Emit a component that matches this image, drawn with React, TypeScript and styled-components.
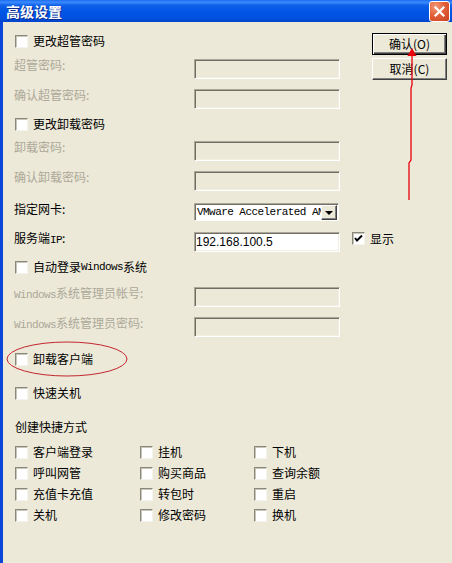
import React from 'react';
import styled, {createGlobalStyle} from 'styled-components';

const GlobalStyle = createGlobalStyle`
	html, body {
		margin: 0;
		padding: 0;
		background: #ece9d8;
	}
	body {
		font-family: "Noto Sans CJK SC", "Liberation Sans", sans-serif;
		font-size: 12px;
	}
	* {
		box-sizing: border-box;
	}
`;

const Window = styled.div`
	position: relative;
	width: 452px;
	height: 563px;
	overflow: hidden;
	background: #ece9d8;
	display: flex;
	flex-direction: column;
`;

const TitleBar = styled.div`
	flex: none;
	height: 22px;
	display: flex;
	align-items: center;
	justify-content: space-between;
	padding: 0 2px 0 6px;
	background: linear-gradient(
		to bottom,
		#1c6cf0 0%,
		#3b8cff 10%,
		#0f5fe8 25%,
		#0055e5 55%,
		#0050de 85%,
		#0043c8 100%
	);
`;

const Title = styled.span`
	color: #fff;
	font-weight: bold;
	font-size: 14px;
	line-height: 14px;
	text-shadow: 1px 1px 0 #0a2a8a;
`;

const CloseButton = styled.div`
	width: 21px;
	height: 21px;
	margin-top: 1px;
	border: 1px solid #fff;
	border-radius: 3px;
	background: radial-gradient(circle at 30% 25%, #f29b78 0%, #e2613a 45%, #c8401f 100%);
	display: flex;
	align-items: center;
	justify-content: center;
`;

const Frame = styled.div`
	flex: 1;
	display: flex;
	border-left: 3px solid #0a46d8;
`;

const Form = styled.div`
	flex: 1;
	min-width: 0;
	display: flex;
	flex-direction: column;
	padding: 9px 0 0 11px;
`;

const Row = styled.div<{$mt: number; $top?: boolean; $h?: number}>`
	display: flex;
	align-items: ${p => (p.$top ? 'flex-start' : 'center')};
	height: ${p => p.$h ?? 20}px;
	margin-top: ${p => p.$mt}px;
`;

const FieldLabel = styled.span<{$disabled?: boolean}>`
	flex: none;
	width: 180px;
	line-height: 12px;
	white-space: nowrap;
	color: ${p => (p.$disabled ? '#aca899' : '#000')};
`;

const Latin = styled.span`
	font-family: "Liberation Mono", monospace;
	font-size: 11px;
	letter-spacing: -0.6px;
`;

const TextBox = styled.input<{$enabled?: boolean}>`
	flex: none;
	width: 146px;
	height: 20px;
	margin: 0;
	padding: 0 1px;
	border: 1px solid;
	border-color: #aca899 #fff #fff #aca899;
	box-shadow: inset 1px 1px 0 #716f64, inset -1px -1px 0 #f1efe2;
	background: ${p => (p.$enabled ? '#fff' : '#ece9d8')};
	font-family: "Liberation Sans", sans-serif;
	font-size: 12px;
	color: #000;
	outline: none;
	-webkit-text-fill-color: #000;
	opacity: 1;
`;

const Select = styled.div`
	flex: none;
	width: 145px;
	height: 18px;
	display: flex;
	border: 1px solid;
	border-color: #aca899 #fff #fff #aca899;
	box-shadow: inset 1px 1px 0 #716f64;
	background: #fff;
	padding: 1px 1px 0 1px;
`;

const SelectText = styled.span`
	flex: 1;
	overflow: hidden;
	white-space: nowrap;
	padding-left: 1px;
	font-family: "Liberation Mono", monospace;
	font-size: 11px;
	letter-spacing: -0.55px;
	line-height: 15px;
	color: #000;
`;

const DropButton = styled.span`
	flex: none;
	width: 16px;
	height: 15px;
	background: #ece9d8;
	border: 1px solid;
	border-color: #fff #404040 #404040 #fff;
	box-shadow: inset -1px -1px 0 #808080;
	display: flex;
	align-items: center;
	justify-content: center;
`;

const Triangle = styled.span`
	width: 0;
	height: 0;
	border-left: 4px solid transparent;
	border-right: 4px solid transparent;
	border-top: 4px solid #000;
`;

const CheckLabel = styled.label<{$ml?: number}>`
	display: flex;
	align-items: center;
	margin-left: ${p => p.$ml ?? 0}px;
	color: #000;
	line-height: 12px;
	white-space: nowrap;
`;

const Box = styled.span`
	flex: none;
	width: 13px;
	height: 13px;
	margin: 0 5px 0 1px;
	background: #fff;
	border: 1px solid;
	border-color: #8a887c #f4f3ee #f4f3ee #8a887c;
	box-shadow: inset 1px 1px 0 #c9c6b8;
	display: flex;
	align-items: center;
	justify-content: center;
`;

const SectionLabel = styled.div`
	margin: 18px 0 0 1px;
	line-height: 12px;
	color: #000;
`;

const Shortcuts = styled.div`
	display: grid;
	grid-template-columns: 125px 114px 1fr;
	grid-auto-rows: 20px;
	row-gap: 1px;
	margin-top: 9px;
`;

const ButtonColumn = styled.div`
	flex: none;
	width: 75px;
	margin-right: 5px;
	padding-top: 11px;
	display: flex;
	flex-direction: column;
	gap: 3px;
`;

const Button = styled.button<{$default?: boolean}>`
	width: 75px;
	height: 22px;
	margin: 0;
	padding: 0;
	background: #ece9d8;
	font-family: "Noto Sans CJK SC", sans-serif;
	font-size: 12px;
	line-height: 12px;
	color: #000;
	border: 1px solid;
	border-color: ${p => (p.$default ? '#000' : '#fff #404040 #404040 #fff')};
	box-shadow: ${p =>
		p.$default
			? 'inset 1px 1px 0 #fff, inset -1px -1px 0 #404040, inset -2px -2px 0 #808080'
			: 'inset -1px -1px 0 #808080'};
`;

const Overlay = styled.svg`
	position: absolute;
	left: 0;
	top: 0;
	pointer-events: none;
`;

const Check = ({children, checked, ml}: {children: React.ReactNode; checked?: boolean; ml?: number}) => (
	<CheckLabel $ml={ml}>
		<Box>
			{checked && (
				<svg width="9" height="9" viewBox="0 0 9 9">
					<path d="M1 4 L3 6.5 L8 1.5" stroke="#000" strokeWidth="2" fill="none"/>
				</svg>
			)}
		</Box>
		{children}
	</CheckLabel>
);

const shortcuts = [
	'客户端登录', '挂机', '下机',
	'呼叫网管', '购买商品', '查询余额',
	'充值卡充值', '转包时', '重启',
	'关机', '修改密码', '换机'
];

const App = (): JSX.Element => (
	<>
		<GlobalStyle/>
		<Window>
			<TitleBar>
				<Title>高级设置</Title>
				<CloseButton>
					<svg width="11" height="11" viewBox="0 0 11 11">
						<path d="M1.5 1.5 L9.5 9.5 M9.5 1.5 L1.5 9.5" stroke="#fff" strokeWidth="2.2" strokeLinecap="square"/>
					</svg>
				</CloseButton>
			</TitleBar>
			<Frame>
				<Form>
					<Row $mt={0}><Check>更改超管密码</Check></Row>
					<Row $mt={8} $top>
						<FieldLabel $disabled>超管密码:</FieldLabel>
						<TextBox disabled/>
					</Row>
					<Row $mt={10} $top>
						<FieldLabel $disabled>确认超管密码:</FieldLabel>
						<TextBox disabled/>
					</Row>
					<Row $mt={5}><Check>更改卸载密码</Check></Row>
					<Row $mt={7} $top>
						<FieldLabel $disabled>卸载密码:</FieldLabel>
						<TextBox disabled/>
					</Row>
					<Row $mt={10} $top>
						<FieldLabel $disabled>确认卸载密码:</FieldLabel>
						<TextBox disabled/>
					</Row>
					<Row $mt={12} $h={18} $top>
						<FieldLabel>指定网卡:</FieldLabel>
						<Select>
							<SelectText>VMware Accelerated AM</SelectText>
							<DropButton><Triangle/></DropButton>
						</Select>
					</Row>
					<Row $mt={11} $top>
						<FieldLabel>服务端<Latin>IP</Latin>:</FieldLabel>
						<TextBox $enabled readOnly value="192.168.100.5"/>
						<Check checked ml={11}>显示</Check>
					</Row>
					<Row $mt={5}><Check>自动登录<Latin>Windows</Latin>系统</Check></Row>
					<Row $mt={10} $top>
						<FieldLabel $disabled><Latin>Windows</Latin>系统管理员帐号:</FieldLabel>
						<TextBox disabled/>
					</Row>
					<Row $mt={10} $top>
						<FieldLabel $disabled><Latin>Windows</Latin>系统管理员密码:</FieldLabel>
						<TextBox disabled/>
					</Row>
					<Row $mt={12}><Check>卸载客户端</Check></Row>
					<Row $mt={14}><Check>快速关机</Check></Row>
					<SectionLabel>创建快捷方式</SectionLabel>
					<Shortcuts>
						{shortcuts.map(s => <Check key={s}>{s}</Check>)}
					</Shortcuts>
				</Form>
				<ButtonColumn>
					<Button $default>确认(O)</Button>
					<Button>取消(C)</Button>
				</ButtonColumn>
			</Frame>
			<Overlay width="452" height="563" viewBox="0 0 452 563">
				<ellipse cx="67" cy="359" rx="60" ry="17" fill="none" stroke="#c4262e" strokeWidth="1"/>
				<polyline points="409,200 409,163 411,160 411,88 412,85 412,56" fill="none" stroke="#e8000b" strokeWidth="1.3"/>
				<polygon points="412,48 407.5,56 416.5,56" fill="#e8000b"/>
			</Overlay>
		</Window>
	</>
);

export default App;
